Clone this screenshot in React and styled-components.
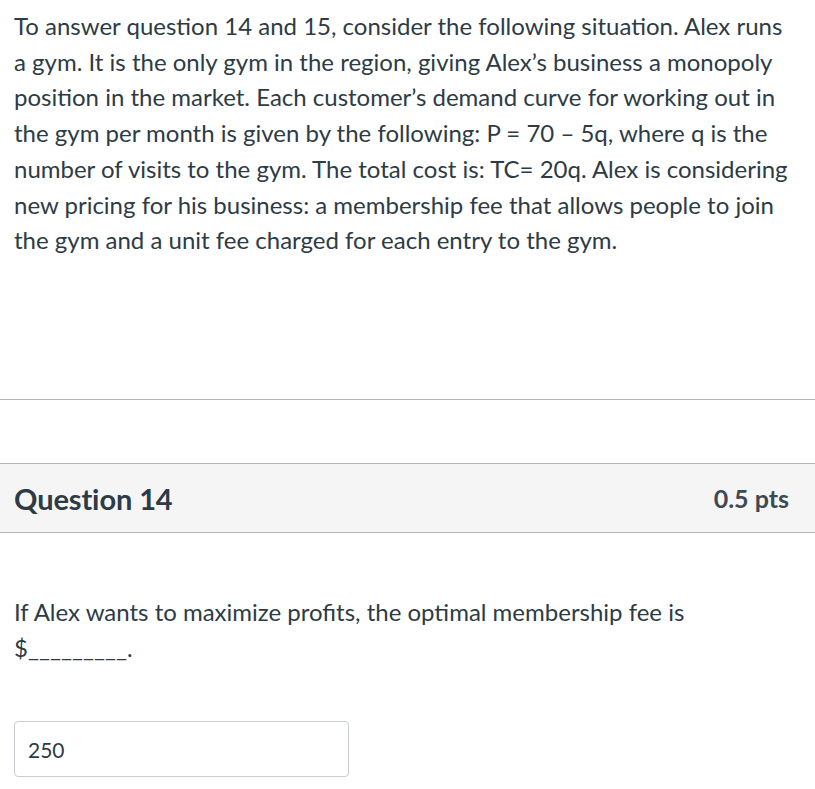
import React from "react"
import styled, { createGlobalStyle } from "styled-components"

const Global = createGlobalStyle`
  body {
    margin: 0;
    background: #fff;
    font-family: Lato, "Open Sans", sans-serif;
    color: #2d3b45;
  }
`

const Page = styled.div`
  width: 815px;
`

const Intro = styled.p`
  margin: 0;
  padding: 8px 22px 0 14px;
  font-size: 24px;
  line-height: 35.7px;
  height: 400px;
  box-sizing: border-box;
  border-bottom: 1px solid #b5b5b5;
`

const Spacer = styled.div`
  height: 63px;
`

const Header = styled.div`
  display: flex;
  align-items: center;
  justify-content: space-between;
  height: 68px;
  padding: 0 26px 0 14px;
  background: #f5f5f5;
  border-top: 1px solid #b5b5b5;
  border-bottom: 1px solid #b5b5b5;
`

const Title = styled.h2`
  margin: 0;
  font-size: 29px;
  font-weight: 700;
  letter-spacing: -0.1px;
`

const Points = styled.span`
  font-size: 25px;
  font-weight: 700;
  color: #3d4a53;
`

const Body = styled.div`
  padding: 61px 22px 0 14px;
`

const Prompt = styled.p`
  margin: 0;
  font-size: 24px;
  line-height: 35.7px;
`

const Answer = styled.div`
  margin-top: 56px;
  width: 335px;
  height: 56px;
  box-sizing: border-box;
  border: 1px solid #c7cdd1;
  border-radius: 4px;
  padding: 0 13px;
  display: flex;
  align-items: center;
  font-size: 21px;
`

export default function App() {
  return (
    <Page>
      <Global />
      <Intro>
        To answer question 14 and 15, consider the following situation. Alex runs a gym. It is the only gym in the region, giving Alex’s business a monopoly position in the market. Each customer’s demand curve for working out in the gym per month is given by the following: P = 70 – 5q, where q is the number of visits to the gym. The total cost is: TC= 20q. Alex is considering new pricing for his business: a membership fee that allows people to join the gym and a unit fee charged for each entry to the gym.
      </Intro>
      <Spacer />
      <Header>
        <Title>Question 14</Title>
        <Points>0.5 pts</Points>
      </Header>
      <Body>
        <Prompt>
          If Alex wants to maximize profits, the optimal membership fee is $_________.
        </Prompt>
        <Answer>250</Answer>
      </Body>
    </Page>
  )
}
